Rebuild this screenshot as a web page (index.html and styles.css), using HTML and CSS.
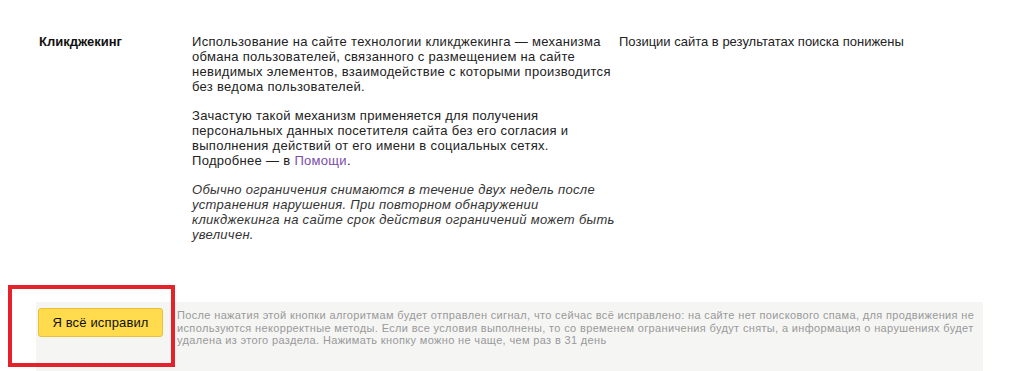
FILE: index.html
```html
<!DOCTYPE html>
<html lang="ru">
<head>
<meta charset="utf-8">
<title>Кликджекинг</title>
<link rel="stylesheet" href="styles.css">
</head>
<body>
<div class="page">
  <div class="violation">
    <div class="v-name">Кликджекинг</div>
    <div class="v-desc">
      <p>Использование на сайте технологии кликджекинга — механизма обмана пользователей, связанного с размещением на сайте невидимых элементов, взаимодействие с которыми производится без ведома пользователей.</p>
      <p>Зачастую такой механизм применяется для получения персональных данных посетителя сайта без его согласия и выполнения действий от его имени в социальных сетях. Подробнее — в <a class="help-link" href="#">Помощи</a>.</p>
      <p class="note">Обычно ограничения снимаются в течение двух недель после устранения нарушения. При повторном обнаружении кликджекинга на сайте срок действия ограничений может быть увеличен.</p>
    </div>
    <div class="v-result">Позиции сайта в результатах поиска понижены</div>
  </div>
  <div class="fix-panel">
    <button class="fix-btn" type="button">Я всё исправил</button>
    <div class="fix-text">После нажатия этой кнопки алгоритмам будет отправлен сигнал, что сейчас всё исправлено: на сайте нет поискового спама, для продвижения не используются некорректные методы. Если все условия выполнены, то со временем ограничения будут сняты, а информация о нарушениях будет удалена из этого раздела. Нажимать кнопку можно не чаще, чем раз в 31 день</div>
  </div>
  <div class="highlight"></div>
</div>
</body>
</html>
```

FILE: styles.css
```css
html, body {
  margin: 0;
  padding: 0;
  background: #ffffff;
}

body {
  font-family: "Liberation Sans", Arial, sans-serif;
  color: #222222;
  width: 1024px;
  height: 371px;
  overflow: hidden;
}

.page {
  position: relative;
  height: 371px;
}

.violation {
  display: grid;
  grid-template-columns: 153px 427px auto;
  padding: 34px 0 0 39px;
  font-size: 13px;
  line-height: 15px;
  height: 302px;
  box-sizing: border-box;
}

.v-name {
  font-family: "Liberation Sans", sans-serif;
  font-weight: bold;
  font-size: 13px;
  color: #111111;
}

.v-desc {
  letter-spacing: 0.3px;
}

.v-desc p {
  margin: 0 0 14px 0;
}

.v-desc p.note {
  font-style: italic;
  color: #333333;
}

.help-link {
  color: #7a4ca8;
  text-decoration: none;
}

.v-result {
  padding-left: 0;
}

.fix-panel {
  margin-left: 36px;
  width: 947px;
  height: 69px;
  background: #f5f5f4;
  display: flex;
  align-items: flex-start;
  padding: 6px 2px 0 2px;
  box-sizing: border-box;
}

.fix-btn {
  flex: none;
  width: 125px;
  height: 29px;
  background: #ffdb4d;
  border: 1px solid #e5c236;
  border-radius: 3px;
  font-family: "Liberation Sans", Arial, sans-serif;
  font-size: 13px;
  letter-spacing: 0.15px;
  color: #111111;
  padding: 0;
  margin-right: 14px;
}

.fix-text {
  flex: 1;
  font-size: 11px;
  line-height: 12.5px;
  letter-spacing: 0.35px;
  color: #999999;
  padding-top: 1px;
}

.highlight {
  position: absolute;
  left: 8px;
  top: 285px;
  width: 167px;
  height: 82px;
  border: 4px solid #e3222b;
  box-sizing: border-box;
}
```
